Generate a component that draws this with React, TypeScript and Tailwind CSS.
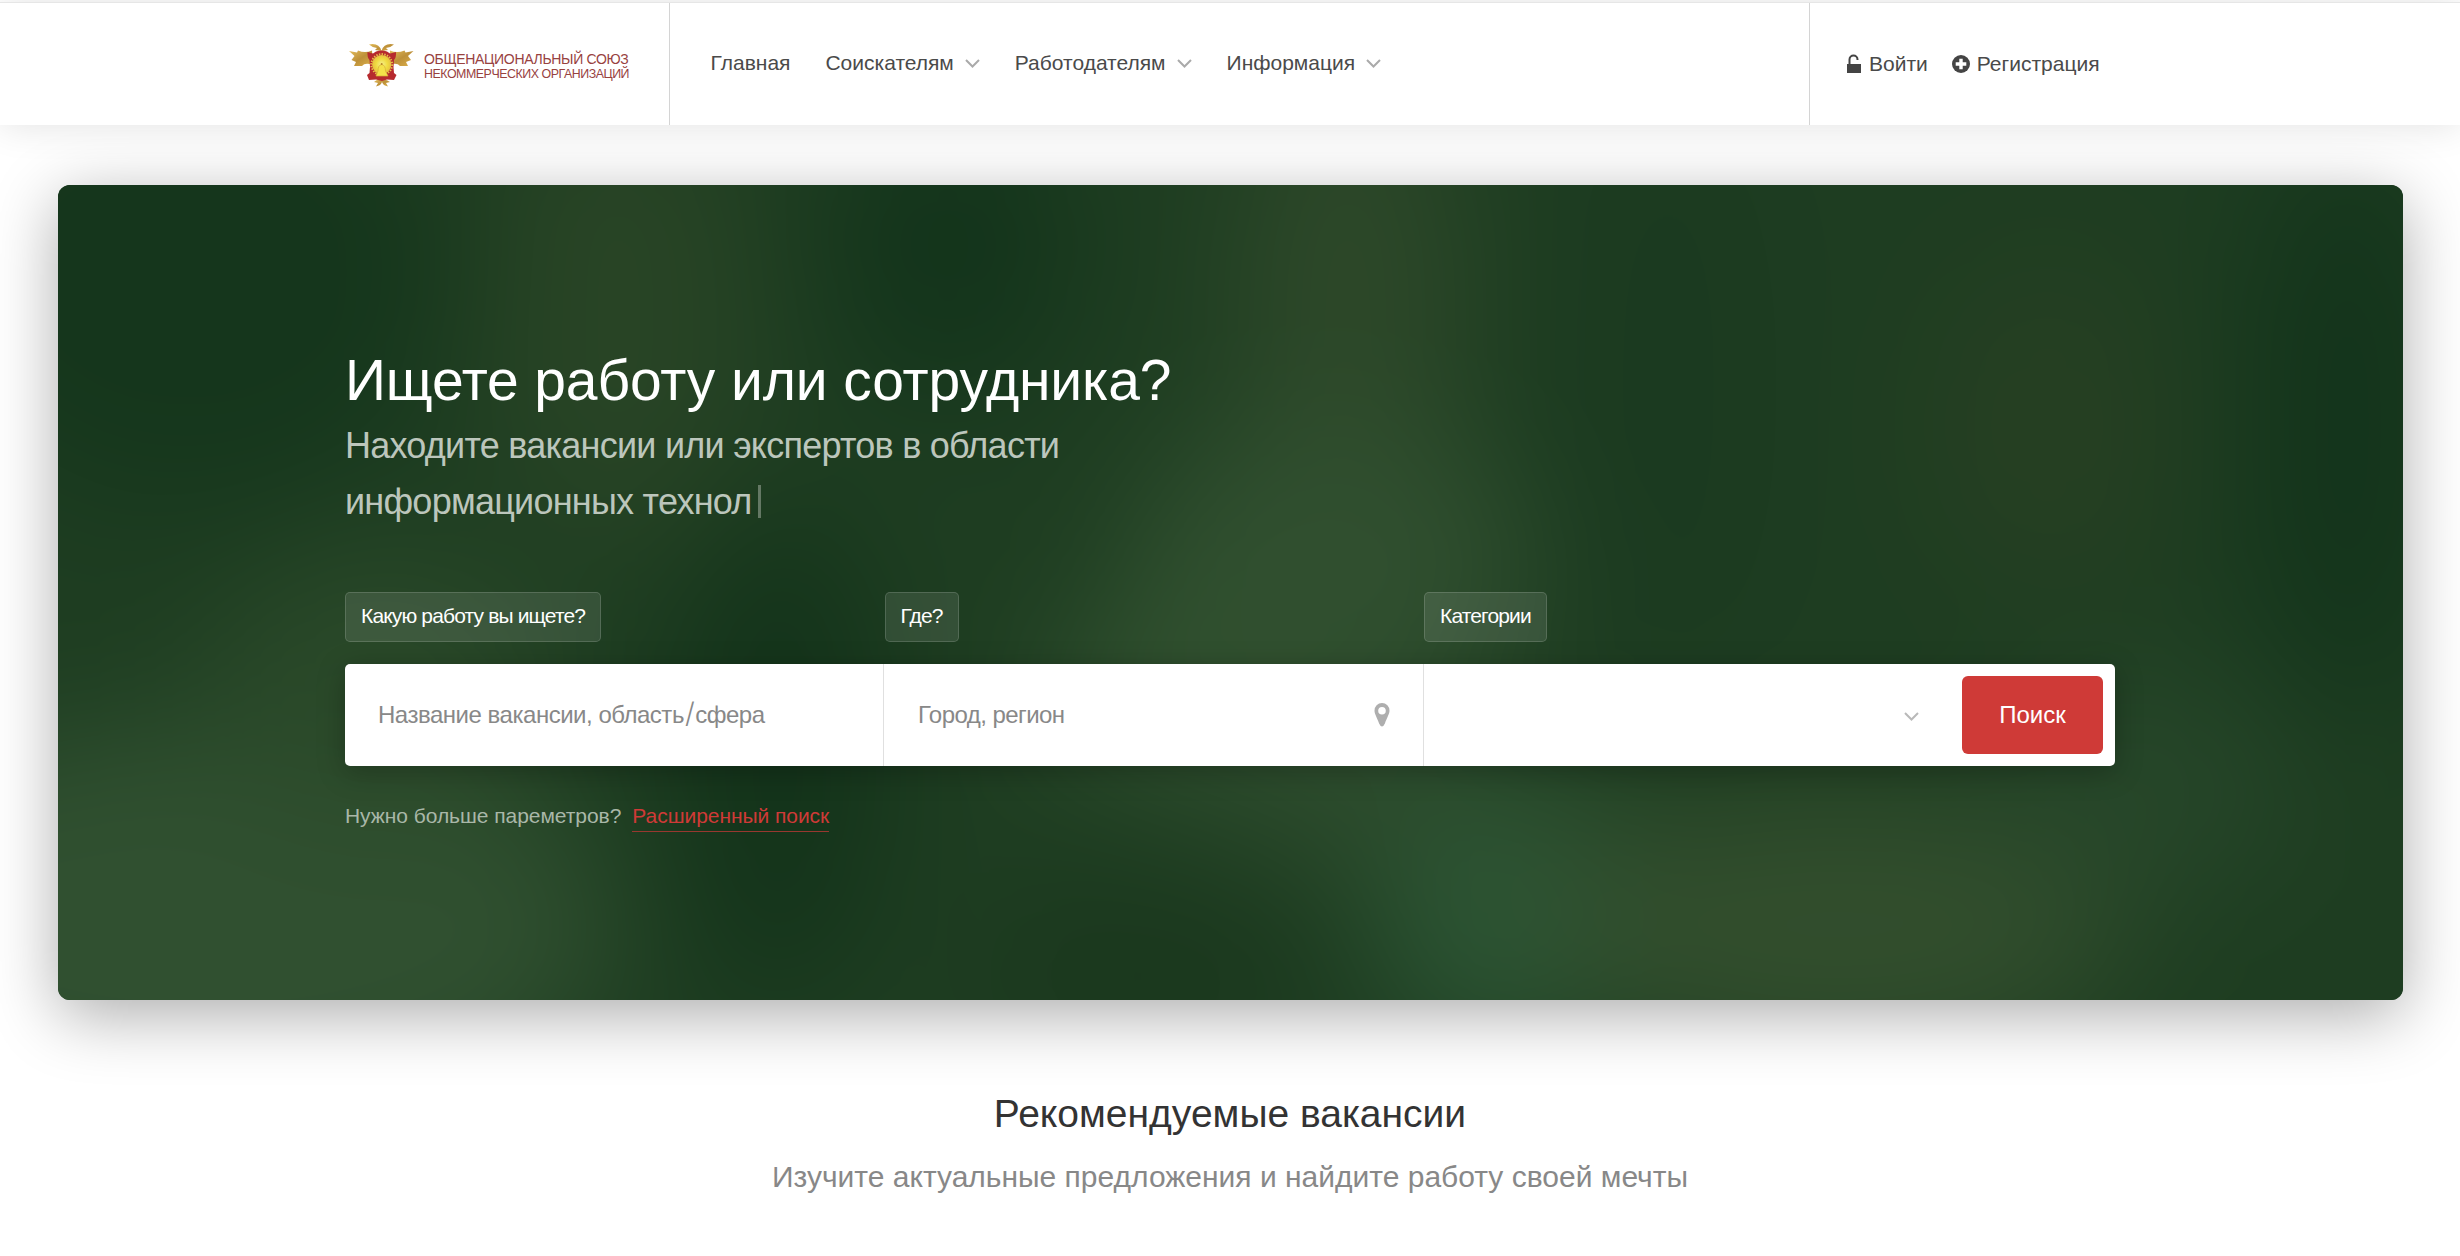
import React from "react";

function Chevron({ className = "" }: { className?: string }) {
  return (
    <svg viewBox="0 0 15 9" className={`h-[9px] w-[15px] ${className}`} fill="none" stroke="currentColor" strokeWidth="2">
      <path d="M1 1 L7.5 7.5 L14 1" />
    </svg>
  );
}

function Logo() {
  return (
    <div className="flex items-center">
      <svg viewBox="0 0 78 50" className="h-[50px] w-[78px]">
        <defs>
          <linearGradient id="gold" x1="0" y1="0" x2="1" y2="1">
            <stop offset="0" stopColor="#e3bd5c" />
            <stop offset="0.5" stopColor="#bd9038" />
            <stop offset="1" stopColor="#dcb04c" />
          </linearGradient>
          <radialGradient id="sun">
            <stop offset="0" stopColor="#f7f08c" />
            <stop offset="0.6" stopColor="#f0dc40" />
            <stop offset="1" stopColor="#e6c040" />
          </radialGradient>
        </defs>
        <g fill="url(#gold)">
          <path d="M4 12 L12 13.500 L13 11.500 Q20 14.500 27 11.500 L28 26 Q20 23 17 27 L9 27 L11 23 L6.500 21 L9.500 17 Z" />
          <path d="M68.500 12 L60.500 13.500 L59.500 11.500 Q52 14.500 45 11.500 L44 26 Q52 23 55 27 L63 27 L61 23 L66 21 L63 17 Z" />
          <path d="M24 5.500 Q34 3.500 36.500 12 L30 11 L32 9 Q28 9 24 5.500Z M49 5.500 Q39 3.500 36.500 12 L43 11 L41 9 Q45 9 49 5.500Z" />
          <path d="M36.500 41 Q32 40 29 43 L33 44 L31 47.500 Q36 46.500 37 43 Q38 46.500 43 47.500 L41 44 L45 43 Q41 40 36.500 41Z" />
        </g>
        <path
          d="M22.500 13 L28 14.500 L31 12.500 Q36.500 10.500 42 12.500 L45 14.500 L51 13 Q51.500 18 49 21 Q48 28 49 34 L51.500 36 L49 41 L42 40.500 L37 42 L31 40.500 L24 41 L22 36 L24.500 34 Q25.500 28 24.500 21 Q22 18 22.500 13Z"
          fill="#b62a2e"
        />
        <circle cx="36.700" cy="25.500" r="10.400" fill="none" stroke="#e8c048" strokeWidth="2" strokeDasharray="1.4 1.3" />
        <circle cx="36.700" cy="25.500" r="9.600" fill="url(#sun)" />
        <path d="M36.700 25.500 Q40.500 26 40.500 32 L43 37 L31 37 L33 32 Q33 26 36.700 25.500Z" fill="#f4e24a" stroke="#d8ae38" strokeWidth="0.700" />
        <circle cx="36.700" cy="25" r="1" fill="#b98a28" />
      </svg>
      <div className="mt-[5px] pl-[1px] whitespace-nowrap text-[#98423f]">
        <div className="text-[14px] leading-[15px] tracking-[-0.32px]">ОБЩЕНАЦИОНАЛЬНЫЙ СОЮЗ</div>
        <div className="text-[12.4px] leading-[14px] tracking-[-0.46px]">НЕКОММЕРЧЕСКИХ ОРГАНИЗАЦИЙ</div>
      </div>
    </div>
  );
}

function HeroBackdrop() {
  return (
    <svg viewBox="0 0 2345 815" preserveAspectRatio="none" className="absolute inset-0 h-full w-full">
      <defs>
        <filter id="soft" x="-100%" y="-100%" width="300%" height="300%" colorInterpolationFilters="sRGB">
          <feGaussianBlur stdDeviation="66" />
        </filter>
      </defs>
      <rect width="2345" height="815" fill="#1e3d21" />
      <g filter="url(#soft)">
        <rect x="-200" y="-200" width="2745" height="1215" fill="#1e3d21" />
        <ellipse cx="130" cy="90" rx="260" ry="230" fill="#15361c" />
        <ellipse cx="560" cy="130" rx="130" ry="240" fill="#284425" />
        <ellipse cx="890" cy="60" rx="120" ry="160" fill="#13341b" />
        <ellipse cx="150" cy="740" rx="400" ry="200" fill="#305030" />
        <ellipse cx="320" cy="500" rx="170" ry="130" fill="#2a4929" />
        <ellipse cx="720" cy="570" rx="100" ry="250" fill="#13331a" />
        <ellipse cx="1290" cy="130" rx="110" ry="270" fill="#2d4829" />
        <ellipse cx="1270" cy="380" rx="200" ry="150" fill="#304f2f" />
        <ellipse cx="1140" cy="510" rx="150" ry="100" fill="#31512f" />
        <ellipse cx="1330" cy="610" rx="280" ry="80" fill="#2d4c2d" transform="rotate(14 1330 610)" />
        <ellipse cx="1080" cy="790" rx="170" ry="80" fill="#1a371d" />
        <ellipse cx="1610" cy="200" rx="110" ry="300" fill="#1b3a20" />
        <ellipse cx="1990" cy="240" rx="120" ry="170" fill="#263f22" />
        <ellipse cx="2290" cy="240" rx="100" ry="300" fill="#13341b" />
        <ellipse cx="1450" cy="740" rx="130" ry="120" fill="#2c5534" />
        <ellipse cx="1780" cy="740" rx="290" ry="130" fill="#324e2d" />
        <ellipse cx="2080" cy="600" rx="150" ry="110" fill="#264629" />
      </g>
    </svg>
  );
}

function NavItem({ label, menu = true }: { label: string; menu?: boolean }) {
  return (
    <a className="flex items-center whitespace-nowrap">
      {label}
      {menu && <Chevron className="ml-[11px] text-[#aaaaaa]" />}
    </a>
  );
}

function FieldLabel({ children }: { children: React.ReactNode }) {
  return (
    <div className="w-[539.5px]">
      <span className="inline-flex h-[50px] items-center rounded-[5px] border border-white/15 bg-white/10 px-[15px] pb-[2px] text-[21px] tracking-[-0.85px] whitespace-nowrap text-white">
        {children}
      </span>
    </div>
  );
}

export default function App() {
  return (
    <div className="h-[1256px] w-[2460px] overflow-hidden bg-white pt-[2px] font-['Liberation_Sans',Arial,sans-serif]">
      <header className="relative z-10 flex h-[123px] border-t border-[#e6e6e6] bg-white pl-[345px] text-[21px] text-[#4a4a4a] shadow-[0_0_36px_rgba(0,0,0,0.12)]">
        <div className="flex w-[325px] items-center border-r border-[#d4d4d4]">
          <Logo />
        </div>
        <nav className="flex w-[1140px] items-center gap-[35px] border-r border-[#d4d4d4] pb-[2px] pl-[40.5px]">
          <NavItem label="Главная" menu={false} />
          <NavItem label="Соискателям" />
          <NavItem label="Работодателям" />
          <NavItem label="Информация" />
        </nav>
        <div className="flex items-center pl-[36px]">
          <svg viewBox="0 0 16 20" className="h-[20px] w-[16px] text-[#444]">
            <path d="M1 10h14v9H1z" fill="currentColor" />
            <path d="M3.5 10V5.5a4 4 0 0 1 8 0V6" fill="none" stroke="currentColor" strokeWidth="2" />
          </svg>
          <span className="ml-[7px]">Войти</span>
          <svg viewBox="0 0 18 18" className="ml-[24px] h-[18px] w-[18px]">
            <circle cx="9" cy="9" r="9" fill="#444" />
            <path d="M9 3.7v10.6M3.7 9h10.6" stroke="#fff" strokeWidth="3.4" />
          </svg>
          <span className="ml-[7px]">Регистрация</span>
        </div>
      </header>

      <section className="relative mx-[58px] mt-[60px] h-[815px] w-[2345px] rounded-[12px] shadow-[0_15px_67px_rgba(0,0,0,0.33)]">
        <div className="absolute inset-0 overflow-hidden rounded-[12px]">
          <HeroBackdrop />
        </div>
        <div className="relative ml-[287px] w-[1770px] pt-[159px]">
          <h1 className="h-[73px] text-[57px] leading-[73px] tracking-[-0.13px] whitespace-nowrap text-white">Ищете работу или сотрудника?</h1>
          <p className="text-[36px] leading-[57px] tracking-[-0.75px] text-[#bcc6bc]">
            Находите вакансии или экспертов в области
            <br />
            <span className="relative top-[-1px]">информационных технол</span>
            <span className="ml-[6px] inline-block h-[33px] w-[3px] bg-[#647864] align-[-3px]" />
          </p>
          <div className="mt-[61px] flex h-[50px]">
            <FieldLabel>Какую работу вы ищете?</FieldLabel>
            <FieldLabel>Где?</FieldLabel>
            <FieldLabel>Категории</FieldLabel>
          </div>
          <div className="mt-[22px] flex h-[102px] items-stretch rounded-[5px] bg-white text-[24px] text-[#888] shadow-[0_6px_28px_rgba(0,0,0,0.25)]">
            <div className="flex w-[539px] items-center border-r border-[#e0e0e0] pb-[1px] pl-[33px] tracking-[-0.48px]">
              <span>
                Название вакансии, область
                <span className="px-px font-['Inter'] text-[28px] leading-none font-light">/</span>
                сфера
              </span>
            </div>
            <div className="flex w-[540px] items-center justify-between border-r border-[#e0e0e0] pr-[33px] pl-[34px] tracking-[-0.55px]">
              Город, регион
              <svg viewBox="0 0 16 24" className="h-[24px] w-[16px]">
                <path fillRule="evenodd" fill="#aeaeae" d="M8 0a7.6 7.6 0 0 1 7.5 7.8c0 3-2.5 7-4.600 12.600Q9.500 23.500 8 23.500T5.100 20.400C3 14.800.5 10.800.5 7.800A7.600 7.600 0 0 1 8 0ZM8 4a3.800 3.800 0 1 0 0 7.600A3.800 3.800 0 0 0 8 4Z" />
              </svg>
            </div>
            <div className="flex flex-1 items-center justify-end pr-[43px]">
              <Chevron className="mt-[2px] text-[#b9b9b9]" />
            </div>
            <button className="my-[12px] mr-[12px] w-[141px] rounded-[6px] bg-[#cf3a37] text-[24px] text-white">Поиск</button>
          </div>
          <div className="mt-[36px] flex text-[21px] leading-[28px] tracking-[-0.05px] text-[#a9b7a8]">
            <span>Нужно больше пареметров?</span>
            <a className="ml-[11px] border-b border-[#98382f] pb-[1px] text-[#cf3a37]">Расширенный поиск</a>
          </div>
        </div>
      </section>

      <section className="mt-[89px] text-center">
        <h2 className="text-[39px] leading-[50px] text-[#333]">Рекомендуемые вакансии</h2>
        <p className="mt-[18px] text-[30px] leading-[40px] text-[#888]">Изучите актуальные предложения и найдите работу своей мечты</p>
      </section>
    </div>
  );
}
